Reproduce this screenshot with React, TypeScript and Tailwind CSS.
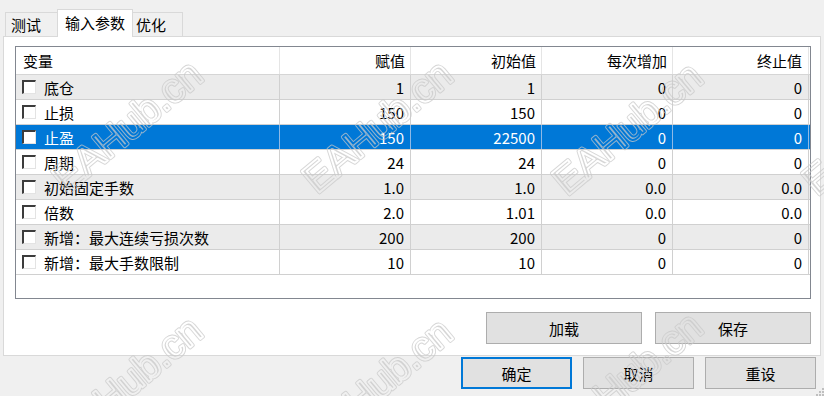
import React from "react";

interface Param {
  name: string;
  value: string;
  start: string;
  step: string;
  stop: string;
}

const params: Param[] = [
  { name: "底仓", value: "1", start: "1", step: "0", stop: "0" },
  { name: "止损", value: "150", start: "150", step: "0", stop: "0" },
  { name: "止盈", value: "150", start: "22500", step: "0", stop: "0" },
  { name: "周期", value: "24", start: "24", step: "0", stop: "0" },
  { name: "初始固定手数", value: "1.0", start: "1.0", step: "0.0", stop: "0.0" },
  { name: "倍数", value: "2.0", start: "1.01", step: "0.0", stop: "0.0" },
  { name: "新增：最大连续亏损次数", value: "200", start: "200", step: "0", stop: "0" },
  { name: "新增：最大手数限制", value: "10", start: "10", step: "0", stop: "0" },
];

const selectedIndex = 2;

// watermark spots, centre of each "EAHub.cn"
const marks = [
  [127, 126],
  [377, 126],
  [627, 128],
  [877, 128],
  [127, 382],
  [377, 384],
  [627, 378],
];

function CheckBox() {
  return (
    <div className="w-[14px] h-[14px] shrink-0 bg-white border-t-2 border-l-2 border-r border-b border-t-[#3c3c3c] border-l-[#3c3c3c] border-r-[#e3e3e3] border-b-[#e3e3e3]" />
  );
}

function Button({ label, w, focused }: { label: string; w: string; focused?: boolean }) {
  return (
    <div
      className={`${w} h-[32px] flex items-center justify-center bg-[#e1e1e1] text-[15px] leading-none ${
        focused ? "border-2 border-[#0078d7]" : "border border-[#adadad]"
      }`}
    >
      {label}
    </div>
  );
}

function Watermark() {
  const text = (stroke: string, width: number) =>
    marks.map(([x, y]) => (
      <text
        key={`${x}-${y}-${width}`}
        transform={`translate(${x} ${y}) rotate(-40)`}
        textAnchor="middle"
        dominantBaseline="central"
        fontFamily='"Liberation Sans", Arial, sans-serif'
        fontSize="40"
        fill="none"
        stroke={stroke}
        strokeWidth={width}
        strokeLinejoin="round"
        strokeLinecap="round"
      >
        EAHub.cn
      </text>
    ));

  return (
    <svg className="pointer-events-none absolute inset-0" width="824" height="396" viewBox="0 0 824 396">
      <defs>
        <mask id="wm" maskUnits="userSpaceOnUse" x="0" y="0" width="824" height="396">
          {text("white", 3.8)}
          {text("black", 2)}
        </mask>
      </defs>
      <rect width="824" height="396" fill="rgba(200,200,200,0.75)" mask="url(#wm)" />
    </svg>
  );
}

export default function App() {
  return (
    <div
      className="relative w-[824px] h-[396px] overflow-hidden bg-[#f0f0f0] text-black"
      style={{ fontFamily: '"Noto Sans CJK SC", "Noto Sans", sans-serif' }}
    >
      {/* Tabs */}
      <div className="flex items-end h-[27px] mt-[9px] pl-[5px] text-[15px] leading-none">
        <div className="w-[52px] h-[24px] flex items-center pl-[5px] border-t border-l border-[#d9d9d9] bg-[#f0f0f0]">测试</div>
        <div className="relative z-10 w-[76px] h-[28px] -mb-px flex items-center pl-[7px] pb-[2px] border-t border-l border-r border-[#d9d9d9] bg-white">
          输入参数
        </div>
        <div className="w-[50px] h-[24px] flex items-center pl-[3px] border-t border-r border-[#d9d9d9] bg-[#f0f0f0]">优化</div>
      </div>

      {/* Panel */}
      <div className="ml-[3px] w-[818px] h-[320px] border border-[#d9d9d9] bg-white">
        {/* List */}
        <div className="mt-[9px] ml-[11px] w-[796px] h-[253px] border border-[#828790] bg-white text-[15px] leading-none">
          <div className="flex h-[28px] border-b border-[#d5d5d5]">
            <div className="w-[264px] flex items-center pl-[7px] border-r border-[#e5e5e5]">变量</div>
            <div className="w-[131px] flex items-center justify-end pr-[5px] border-r border-[#e5e5e5]">赋值</div>
            <div className="w-[131px] flex items-center justify-end pr-[5px] border-r border-[#e5e5e5]">初始值</div>
            <div className="w-[131px] flex items-center justify-end pr-[5px] border-r border-[#e5e5e5]">每次增加</div>
            <div className="w-[136px] flex items-center justify-end pr-[6px] border-r border-[#e5e5e5]">终止值</div>
          </div>

          {params.map((p, i) => {
            const sel = i === selectedIndex;
            const row = sel ? "bg-[#0078d7] text-white" : i % 2 === 0 ? "bg-[#ebebeb]" : "bg-white";
            const line = sel ? "border-[#8fb9e6]" : "border-[#d0d0d0]";
            return (
              <div key={p.name} className={`flex h-[25px] border-b border-[#d0d0d0] ${row}`}>
                <div className={`w-[264px] flex items-center pl-[6px] gap-[8px] border-r ${line}`}>
                  <CheckBox />
                  <span>{p.name}</span>
                </div>
                <div className={`w-[131px] flex items-center justify-end pr-[6px] border-r ${line}`}>{p.value}</div>
                <div className={`w-[131px] flex items-center justify-end pr-[6px] border-r ${line}`}>{p.start}</div>
                <div className={`w-[131px] flex items-center justify-end pr-[6px] border-r ${line}`}>{p.step}</div>
                <div className={`w-[136px] flex items-center justify-end pr-[6px] border-r ${line}`}>{p.stop}</div>
              </div>
            );
          })}
        </div>

        <div className="mt-[13px] ml-[11px] w-[796px] flex justify-end gap-[13px]">
          <Button label="加载" w="w-[156px]" />
          <Button label="保存" w="w-[156px]" />
        </div>
      </div>

      {/* Dialog buttons */}
      <div className="mt-[1px] flex justify-end gap-[11px] pr-[8px]">
        <Button label="确定" w="w-[111px]" focused />
        <Button label="取消" w="w-[111px]" />
        <Button label="重设" w="w-[111px]" />
      </div>

      {/* size grip */}
      <svg className="absolute right-0 bottom-0" width="8" height="8" viewBox="0 0 8 8">
        <rect x="6" y="0" width="2" height="2" fill="#bfbfbf" />
        <rect x="3" y="3" width="2" height="2" fill="#bfbfbf" />
        <rect x="6" y="3" width="2" height="2" fill="#bfbfbf" />
        <rect x="0" y="6" width="2" height="2" fill="#bfbfbf" />
        <rect x="3" y="6" width="2" height="2" fill="#bfbfbf" />
        <rect x="6" y="6" width="2" height="2" fill="#bfbfbf" />
      </svg>

      <Watermark />
    </div>
  );
}
